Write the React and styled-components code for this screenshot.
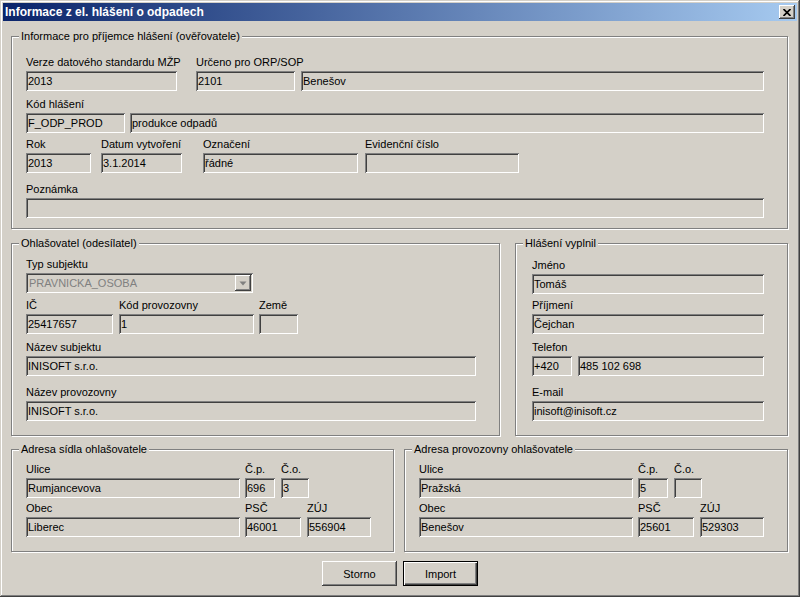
import React from 'react';
import styled, { createGlobalStyle } from 'styled-components';

const face = '#d4d0c8';

const GlobalStyle = createGlobalStyle`
  body {
    margin: 0;
    background: ${face};
    font-family: "Liberation Sans", Arial, sans-serif;
    font-size: 11px;
    color: #000;
  }
`;

const Window = styled.div`
  width: 800px;
  height: 597px;
  box-sizing: border-box;
  padding: 3px;
  background: ${face};
  box-shadow: inset -1px -1px 0 #404040, inset 1px 1px 0 ${face},
    inset -2px -2px 0 #808080, inset 2px 2px 0 #fff;
`;

const TitleBar = styled.div`
  height: 18px;
  display: flex;
  align-items: center;
  justify-content: space-between;
  padding: 0 2px;
  background: linear-gradient(to right, #0a246a, #a6caf0);
`;

const Title = styled.span`
  color: #fff;
  font-weight: bold;
  font-size: 12px;
  white-space: nowrap;
`;

const CloseButton = styled.div`
  width: 16px;
  height: 14px;
  display: flex;
  align-items: center;
  justify-content: center;
  background: ${face};
  box-shadow: inset -1px -1px 0 #404040, inset 1px 1px 0 #fff,
    inset -2px -2px 0 #808080;
`;

const Client = styled.div`
  padding: 15px 8px 0;
`;

const GroupRow = styled.div`
  display: flex;
  margin-top: ${p => p.$mt || 0}px;
`;

const Group = styled.div`
  width: ${p => p.$w}px;
  box-sizing: border-box;
  margin-left: ${p => p.$ml || 0}px;
  border: 1px solid #808080;
  box-shadow: 1px 1px 0 #fff, inset 1px 1px 0 #fff;
`;

const Caption = styled.div`
  width: fit-content;
  height: 13px;
  line-height: 13px;
  margin: -7px 0 0 7px;
  padding: 0 2px;
  background: ${face};
  white-space: nowrap;
`;

const GroupBody = styled.div`
  padding: ${p => p.$pad};
`;

const Row = styled.div`
  display: flex;
  align-items: flex-end;
  margin-top: ${p => p.$mt || 0}px;
`;

const FieldBox = styled.div`
  display: flex;
  flex-direction: column;
  flex: none;
  margin-left: ${p => p.$ml || 0}px;
`;

const Label = styled.div`
  width: 0;
  height: 13px;
  line-height: 13px;
  margin-bottom: 2px;
  white-space: nowrap;
`;

const Edit = styled.div`
  width: ${p => p.$w}px;
  height: 20px;
  box-sizing: border-box;
  padding: 0 2px;
  line-height: 20px;
  white-space: nowrap;
  overflow: hidden;
  background: ${face};
  box-shadow: inset 1px 1px 0 #808080, inset -1px -1px 0 #fff,
    inset 2px 2px 0 #404040, inset -2px -2px 0 ${face};
`;

const Combo = styled(Edit)`
  display: flex;
  align-items: center;
  justify-content: space-between;
  padding: 2px 2px 2px 3px;
  line-height: 16px;
  color: #808080;
`;

const DropButton = styled.div`
  width: 16px;
  height: 16px;
  display: flex;
  align-items: center;
  justify-content: center;
  box-shadow: inset -1px -1px 0 #404040, inset 1px 1px 0 #fff,
    inset -2px -2px 0 #808080;
`;

const Buttons = styled.div`
  display: flex;
  justify-content: center;
  gap: 6px;
  margin-top: 9px;
`;

const Button = styled.div`
  width: 75px;
  height: 25px;
  box-sizing: border-box;
  display: flex;
  align-items: center;
  justify-content: center;
  background: ${face};
  box-shadow: ${p =>
    p.$default
      ? `inset 0 0 0 1px #000, inset 2px 2px 0 #fff, inset -2px -2px 0 #404040, inset -3px -3px 0 #808080`
      : `inset -1px -1px 0 #404040, inset 1px 1px 0 #fff, inset -2px -2px 0 #808080`};
`;

function Field({ label, value, w, ml }) {
  return (
    <FieldBox $ml={ml}>
      {label !== undefined && <Label>{label}</Label>}
      <Edit $w={w}>{value}</Edit>
    </FieldBox>
  );
}

function GroupBox({ title, w, ml, pad, children }) {
  return (
    <Group $w={w} $ml={ml}>
      <Caption>{title}</Caption>
      <GroupBody $pad={pad}>{children}</GroupBody>
    </Group>
  );
}

function Address({ title, w, ml, street, cp, co, city, psc, zuj }) {
  return (
    <GroupBox title={title} w={w} ml={ml} pad="7px 0 14px 14px">
      <Row>
        <Field label="Ulice" value={street} w={214} />
        <Field label="Č.p." value={cp} w={30} ml={5} />
        <Field label="Č.o." value={co} w={28} ml={6} />
      </Row>
      <Row $mt={4}>
        <Field label="Obec" value={city} w={214} />
        <Field label="PSČ" value={psc} w={56} ml={5} />
        <Field label="ZÚJ" value={zuj} w={64} ml={6} />
      </Row>
    </GroupBox>
  );
}

export default function App() {
  return (
    <Window>
      <GlobalStyle />
      <TitleBar>
        <Title>Informace z el. hlášení o odpadech</Title>
        <CloseButton>
          <svg width="8" height="7" viewBox="0 0 8 7">
            <path d="M0.5 0 L7.5 7 M7.5 0 L0.5 7" stroke="#000" strokeWidth="1.7" />
          </svg>
        </CloseButton>
      </TitleBar>
      <Client>
        <GroupBox title="Informace pro příjemce hlášení (ověřovatele)" w={777} pad="13px 0 10px 14px">
          <Row>
            <Field label="Verze datového standardu MŽP" value="2013" w={151} />
            <Field label="Určeno pro ORP/SOP" value="2101" w={99} ml={19} />
            <Field value="Benešov" w={463} ml={6} />
          </Row>
          <Row $mt={7}>
            <Field label="Kód hlášení" value="F_ODP_PROD" w={99} />
            <Field value="produkce odpadů" w={634} ml={5} />
          </Row>
          <Row $mt={5}>
            <Field label="Rok" value="2013" w={65} />
            <Field label="Datum vytvoření" value="3.1.2014" w={81} ml={10} />
            <Field label="Označení" value="řádné" w={155} ml={21} />
            <Field label="Evidenční číslo" value="" w={154} ml={7} />
          </Row>
          <Row $mt={10}>
            <Field label="Poznámka" value="" w={738} />
          </Row>
        </GroupBox>

        <GroupRow $mt={14}>
          <GroupBox title="Ohlašovatel (odesílatel)" w={489} pad="8px 0 14px 14px">
            <Row>
              <FieldBox>
                <Label>Typ subjektu</Label>
                <Combo $w={227}>
                  PRAVNICKA_OSOBA
                  <DropButton>
                    <svg width="8" height="5" viewBox="0 0 8 5">
                      <polygon points="0.5,0.5 7.5,0.5 4,4.5" fill="#808080" />
                    </svg>
                  </DropButton>
                </Combo>
              </FieldBox>
            </Row>
            <Row $mt={6}>
              <Field label="IČ" value="25417657" w={87} />
              <Field label="Kód provozovny" value="1" w={135} ml={6} />
              <Field label="Země" value="" w={39} ml={5} />
            </Row>
            <Row $mt={7}>
              <Field label="Název subjektu" value="INISOFT s.r.o." w={450} />
            </Row>
            <Row $mt={10}>
              <Field label="Název provozovny" value="INISOFT s.r.o." w={450} />
            </Row>
          </GroupBox>
          <GroupBox title="Hlášení vyplnil" w={273} ml={15} pad="9px 0 14px 16px">
            <Row>
              <Field label="Jméno" value="Tomáš" w={232} />
            </Row>
            <Row $mt={5}>
              <Field label="Příjmení" value="Čejchan" w={232} />
            </Row>
            <Row $mt={7}>
              <Field label="Telefon" value="+420" w={40} />
              <Field value="485 102 698" w={186} ml={6} />
            </Row>
            <Row $mt={10}>
              <Field label="E-mail" value="inisoft@inisoft.cz" w={232} />
            </Row>
          </GroupBox>
        </GroupRow>

        <GroupRow $mt={13}>
          <Address
            title="Adresa sídla ohlašovatele"
            w={383}
            street="Rumjancevova"
            cp="696"
            co="3"
            city="Liberec"
            psc="46001"
            zuj="556904"
          />
          <Address
            title="Adresa provozovny ohlašovatele"
            w={384}
            ml={10}
            street="Pražská"
            cp="5"
            co=""
            city="Benešov"
            psc="25601"
            zuj="529303"
          />
        </GroupRow>

        <Buttons>
          <Button>Storno</Button>
          <Button $default>Import</Button>
        </Buttons>
      </Client>
    </Window>
  );
}
